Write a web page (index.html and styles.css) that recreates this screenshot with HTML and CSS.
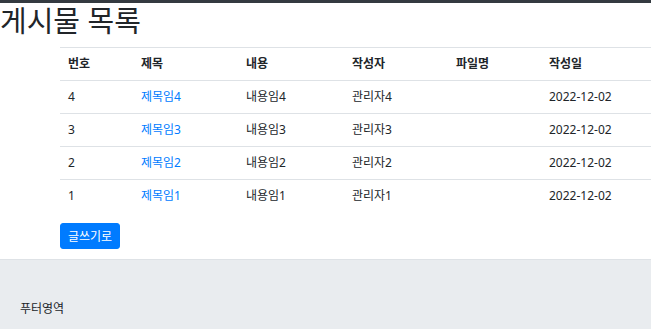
FILE: index.html
```html
<!DOCTYPE html>
<html lang="ko">
<head>
  <meta charset="UTF-8" />
  <title>게시물 목록</title>
  <link rel="stylesheet" href="styles.css">
</head>
<body>
  <div class="topbar"></div>
  <h1 class="title">게시물 목록</h1>

  <div class="board">
    <table class="board-table">
      <thead>
        <tr>
          <th class="col-no">번호</th>
          <th class="col-title">제목</th>
          <th class="col-content">내용</th>
          <th class="col-writer">작성자</th>
          <th class="col-file">파일명</th>
          <th>작성일</th>
        </tr>
      </thead>
      <tbody>
        <tr>
          <td>4</td>
          <td><a href="#">제목임4</a></td>
          <td>내용임4</td>
          <td>관리자4</td>
          <td></td>
          <td>2022-12-02</td>
        </tr>
        <tr>
          <td>3</td>
          <td><a href="#">제목임3</a></td>
          <td>내용임3</td>
          <td>관리자3</td>
          <td></td>
          <td>2022-12-02</td>
        </tr>
        <tr>
          <td>2</td>
          <td><a href="#">제목임2</a></td>
          <td>내용임2</td>
          <td>관리자2</td>
          <td></td>
          <td>2022-12-02</td>
        </tr>
        <tr>
          <td>1</td>
          <td><a href="#">제목임1</a></td>
          <td>내용임1</td>
          <td>관리자1</td>
          <td></td>
          <td>2022-12-02</td>
        </tr>
      </tbody>
    </table>

    <button type="button" class="btn">글쓰기로</button>
  </div>

  <footer class="footer">
    <p>푸터영역</p>
  </footer>
</body>
</html>
```

FILE: styles.css
```css
* {
  font-family: "Noto Sans", "Noto Sans CJK KR", sans-serif;
  box-sizing: border-box;
}

body {
  margin: 0;
  color: #212529;
  background: #fff;
}

.topbar {
  height: 3px;
  background: #343a40;
}

.title {
  margin: 0;
  font-size: 29px;
  font-weight: 400;
  line-height: 35px;
  padding-bottom: 9px;
}

.board {
  padding-left: 60px;
}

.board-table {
  width: 100%;
  border-collapse: collapse;
  font-size: 12px;
}

.board-table th,
.board-table td {
  text-align: left;
  padding: 7px 8px;
  line-height: 18px;
  border-top: 1px solid #dee2e6;
}

.board-table th {
  font-weight: 700;
}

.col-no { width: 73px; }
.col-title { width: 105px; }
.col-content { width: 106px; }
.col-writer { width: 104px; }
.col-file { width: 93px; }

.board-table a {
  color: #007bff;
  text-decoration: none;
}

.btn {
  margin: 11px 0 10px;
  width: 60px;
  height: 26px;
  padding: 0;
  font-size: 12px;
  color: #fff;
  background: #007bff;
  border: 1px solid #007bff;
  border-radius: 3px;
  cursor: pointer;
}

.footer {
  background: #e9ecef;
  border-top: 1px solid #dee2e6;
  padding: 40px 20px 30px;
}

.footer p {
  margin: 0;
  font-size: 12px;
  line-height: 18px;
}
```
